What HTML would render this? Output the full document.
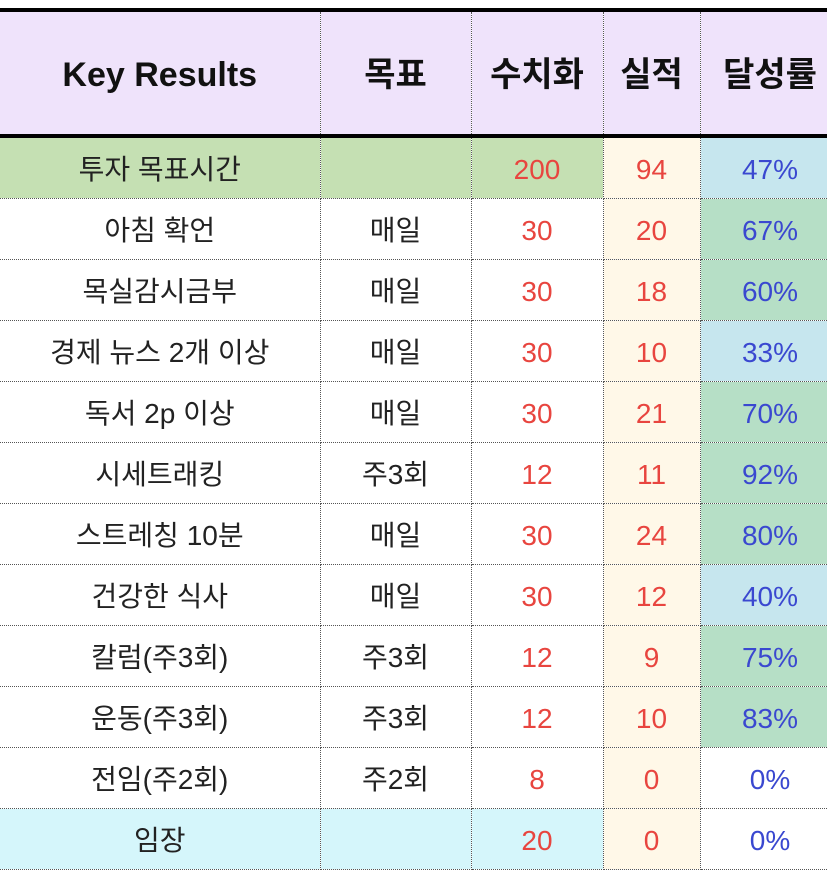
<!DOCTYPE html>
<html><head><meta charset="utf-8"><style>
body{margin:0;width:827px;height:868px;overflow:hidden;background:#fff;font-family:"Liberation Sans","Noto Sans CJK KR",sans-serif;}
table{position:absolute;left:0;top:8px;border-collapse:collapse;table-layout:fixed;width:840px;}
td{border:1px dotted #555;text-align:center;font-size:28px;height:56px;line-height:56px;padding:4px 0 0 0;color:#222;white-space:nowrap;overflow:hidden;}
tr.h td{height:118px;line-height:118px;background:#efe3fb;font-weight:bold;font-size:34px;color:#111;border-top:4px solid #000;border-bottom:4px solid #000;}
td:first-child{border-left:none}
.r{color:#e8453f}.b{color:#3a48d0}
.c4{background:#fff8e8}
.g{background:#b6dfc6}.bl{background:#c6e6ee}
.gr td.k{background:#c5e0b3}
.cy{background:#d5f6fb}
</style></head><body>
<table>
<col style="width:320px"><col style="width:151px"><col style="width:132px"><col style="width:97px"><col style="width:140px">
<tr class="h"><td>Key Results</td><td>목표</td><td>수치화</td><td>실적</td><td>달성률</td></tr>
<tr class="gr"><td class="k">투자 목표시간</td><td class="k"></td><td class="k r">200</td><td class="c4 r">94</td><td class="bl b">47%</td></tr>
<tr><td>아침 확언</td><td>매일</td><td class="r">30</td><td class="c4 r">20</td><td class="g b">67%</td></tr>
<tr><td>목실감시금부</td><td>매일</td><td class="r">30</td><td class="c4 r">18</td><td class="g b">60%</td></tr>
<tr><td>경제 뉴스 2개 이상</td><td>매일</td><td class="r">30</td><td class="c4 r">10</td><td class="bl b">33%</td></tr>
<tr><td>독서 2p 이상</td><td>매일</td><td class="r">30</td><td class="c4 r">21</td><td class="g b">70%</td></tr>
<tr><td>시세트래킹</td><td>주3회</td><td class="r">12</td><td class="c4 r">11</td><td class="g b">92%</td></tr>
<tr><td>스트레칭 10분</td><td>매일</td><td class="r">30</td><td class="c4 r">24</td><td class="g b">80%</td></tr>
<tr><td>건강한 식사</td><td>매일</td><td class="r">30</td><td class="c4 r">12</td><td class="bl b">40%</td></tr>
<tr><td>칼럼(주3회)</td><td>주3회</td><td class="r">12</td><td class="c4 r">9</td><td class="g b">75%</td></tr>
<tr><td>운동(주3회)</td><td>주3회</td><td class="r">12</td><td class="c4 r">10</td><td class="g b">83%</td></tr>
<tr><td>전임(주2회)</td><td>주2회</td><td class="r">8</td><td class="c4 r">0</td><td class="b">0%</td></tr>
<tr><td class="cy">임장</td><td class="cy"></td><td class="cy r">20</td><td class="c4 r">0</td><td class="b">0%</td></tr>
</table>
</body></html>
